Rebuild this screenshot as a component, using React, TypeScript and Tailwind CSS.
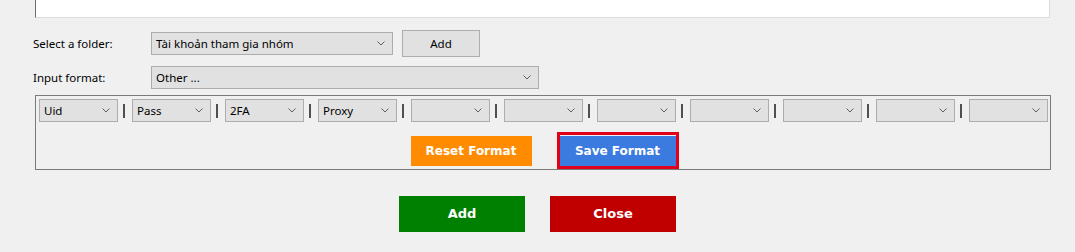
import React from "react";

const Chevron = () => (
    <svg width="8" height="5" viewBox="0 0 8 5" className="shrink-0">
        <path d="M0.5 0.5 L4 4 L7.5 0.5" stroke="#606060" fill="none" strokeWidth="1" />
    </svg>
);

const Dropdown = ({ value, className }: { value: string; className: string }) => (
    <div
        className={
            "flex items-center justify-between border border-[#adadad] bg-[#e1e1e1] pl-[4px] pr-[7px] text-[11.5px] text-black " +
            className
        }
    >
        <span className="whitespace-nowrap leading-[16px]">{value}</span>
        <Chevron />
    </div>
);

const fields = ["Uid", "Pass", "2FA", "Proxy", "", "", "", "", "", "", ""];

export default function App() {
    return (
        <div className="w-[1075px] h-[252px] bg-[#f0f0f0] overflow-hidden font-['Noto_Sans',sans-serif]">
            {/* bottom of the text box above */}
            <div className="ml-[35px] w-[1015px] h-[18px] bg-white border-l border-l-[#6d6d6d] border-r border-b border-r-[#dcdcdc] border-b-[#dcdcdc]" />

            <div className="flex items-center h-[27px] mt-[12px] pl-[33px]">
                <span className="w-[118px] text-[11.5px] text-black">Select a folder:</span>
                <Dropdown value="Tài khoản tham gia nhóm" className="w-[242px] h-[23px]" />
                <button className="ml-[9px] w-[78px] h-[27px] border border-[#adadad] bg-[#e1e1e1] text-[11.5px] text-black">
                    Add
                </button>
            </div>

            <div className="flex items-center h-[23px] mt-[9px] pl-[33px]">
                <span className="w-[118px] text-[11.5px] text-black">Input format:</span>
                <Dropdown value="Other ..." className="w-[388px] h-[23px]" />
            </div>

            <div className="ml-[35px] mt-[6px] w-[1016px] h-[75px] border border-[#7a7a7a] pt-[3px] pl-[3px]">
                <div className="flex items-center h-[23px]">
                    {fields.map((f, i) => (
                        <React.Fragment key={i}>
                            {i > 0 && <div className="ml-[5px] mr-[7px] w-[2px] h-[14px] bg-[#505050]" />}
                            <Dropdown value={f} className="w-[79px] h-[23px]" />
                        </React.Fragment>
                    ))}
                </div>
                <div className="flex items-center justify-center gap-[25px] mt-[10px] font-['DejaVu_Sans',sans-serif] font-bold text-[12px] text-white">
                    <button className="w-[121px] h-[30px] bg-[#ff8c00]">Reset Format</button>
                    <div className="w-[122px] h-[37px] border-[3px] border-[#e0001a] pt-[1px]">
                        <button className="w-full h-full bg-[#3b7be0]">Save Format</button>
                    </div>
                </div>
            </div>

            <div className="flex justify-center gap-[25px] mt-[26px] font-['DejaVu_Sans',sans-serif] font-bold text-[13px] text-white">
                <button className="w-[126px] h-[36px] bg-[#008000]">Add</button>
                <button className="w-[126px] h-[36px] bg-[#c00000]">Close</button>
            </div>
        </div>
    );
}
